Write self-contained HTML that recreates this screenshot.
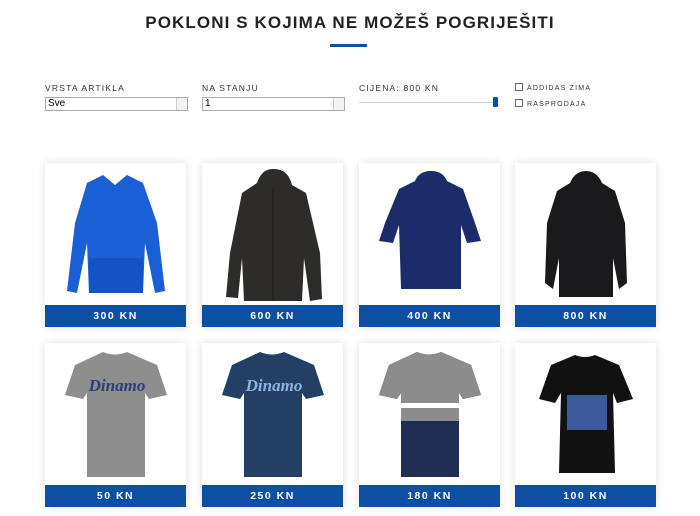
<!DOCTYPE html>
<html><head><meta charset="utf-8"><style>
body{margin:0;width:700px;height:516px;background:#fff;font-family:"Liberation Sans",sans-serif;position:relative;overflow:hidden}
.t{position:absolute;left:0;width:700px;top:13px;text-align:center;font-weight:bold;font-size:17px;letter-spacing:1.1px;color:#222}
.ul{position:absolute;left:330px;top:44px;width:37px;height:3px;background:#0d4fa3}
.lab{position:absolute;font-size:8.5px;letter-spacing:1.2px;color:#333}
.sel{position:absolute;top:97px;height:12px;border:1px solid #aaa;font-size:10px;line-height:12px;padding-left:2px;box-sizing:content-box;color:#000}
.sel:after{content:"";position:absolute;right:0;top:0;width:10px;height:12px;border-left:1px solid #ccc;background:#f3f3f3}
.cb{position:absolute;font-size:7px;letter-spacing:1.2px;color:#333}
.cb i{display:inline-block;width:6px;height:6px;border:1px solid #666;margin-right:4px;vertical-align:-1px}
.card{position:absolute;width:141px;height:164px;background:#fff;box-shadow:0 0 8px rgba(0,0,0,.13)}
.card svg{position:absolute;left:0;top:0}
.p{position:absolute;left:0;bottom:0;width:141px;height:22px;background:#0d4fa3;color:#fff;font-weight:bold;font-size:10.5px;letter-spacing:1.5px;text-align:center;line-height:22px}
</style></head><body>
<div class="t">POKLONI S KOJIMA NE MOŽEŠ POGRIJEŠITI</div>
<div class="ul"></div>
<div class="lab" style="left:45px;top:83px">VRSTA ARTIKLA</div>
<div class="lab" style="left:202px;top:83px">NA STANJU</div>
<div class="lab" style="left:359px;top:83px">CIJENA: 800 KN</div>
<div class="sel" style="left:45px;width:139px">Sve</div>
<div class="sel" style="left:202px;width:139px">1</div>
<div style="position:absolute;left:359px;top:102px;width:136px;height:1px;background:#ccc"></div>
<div style="position:absolute;left:493px;top:97px;width:5px;height:10px;background:#0d4fa3;border-radius:1px"></div>
<div class="cb" style="left:515px;top:83px"><i></i>ADDIDAS ZIMA</div>
<div class="cb" style="left:515px;top:99px"><i></i>RASPRODAJA</div>

<div class="card" style="left:45px;top:163px"><svg width="141" height="141"><path d="M58 12 L70 22 L82 12 L98 20 L112 60 L120 128 L110 130 L100 80 L98 130 L44 130 L42 80 L32 130 L22 128 L30 60 L42 20Z" fill="#1a5fd6"/><rect x="44" y="95" width="54" height="35" fill="#1552c4"/></svg><div class="p">300 KN</div></div>
<div class="card" style="left:202px;top:163px"><svg width="141" height="141"><path d="M55 20 Q60 5 72 6 Q86 6 90 22 L104 30 L118 90 L120 136 L108 138 L102 95 L100 138 L42 138 L40 95 L36 135 L24 134 L28 90 L40 30Z" fill="#2e2c2a"/><line x1="71" y1="25" x2="71" y2="138" stroke="#1a1a1a"/></svg><div class="p">600 KN</div></div>
<div class="card" style="left:359px;top:163px"><svg width="141" height="141"><path d="M56 18 Q60 8 72 8 Q84 8 88 18 L104 26 L116 60 L122 78 L108 80 L102 62 L102 126 L42 126 L40 62 L34 80 L20 78 L26 60 L40 26Z" fill="#1c2b6a"/></svg><div class="p">400 KN</div></div>
<div class="card" style="left:515px;top:163px"><svg width="141" height="141"><path d="M55 20 Q60 8 71 8 Q82 8 87 20 L100 28 L110 60 L112 120 L104 126 L98 95 L98 134 L44 134 L44 95 L38 126 L30 120 L32 60 L42 28Z" fill="#1a1a1c"/></svg><div class="p">800 KN</div></div>

<div class="card" style="left:45px;top:343px"><svg width="141" height="141"><path d="M58 9 Q70 14 82 9 L112 22 L122 52 L104 56 L100 50 L100 134 L42 134 L42 50 L38 56 L20 52 L30 22Z" fill="#8e8e8e"/><text x="72" y="48" font-family="Liberation Serif" font-style="italic" font-weight="bold" font-size="17" fill="#2a3e7a" text-anchor="middle">Dinamo</text></svg><div class="p">50 KN</div></div>
<div class="card" style="left:202px;top:343px"><svg width="141" height="141"><path d="M58 9 Q70 14 82 9 L112 22 L122 52 L104 56 L100 50 L100 134 L42 134 L42 50 L38 56 L20 52 L30 22Z" fill="#233f66"/><text x="72" y="48" font-family="Liberation Serif" font-style="italic" font-weight="bold" font-size="17" fill="#8fb3e0" text-anchor="middle">Dinamo</text></svg><div class="p">250 KN</div></div>
<div class="card" style="left:359px;top:343px"><svg width="141" height="141"><path d="M58 9 Q70 14 82 9 L112 22 L122 52 L104 56 L100 50 L100 134 L42 134 L42 50 L38 56 L20 52 L30 22Z" fill="#1f2d52"/><path d="M58 9 Q70 14 82 9 L112 22 L122 52 L104 56 L100 50 L100 78 L42 78 L42 50 L38 56 L20 52 L30 22Z" fill="#8c8c8c"/><rect x="30" y="60" width="84" height="5" fill="#fff"/></svg><div class="p">180 KN</div></div>
<div class="card" style="left:515px;top:343px"><svg width="141" height="141"><path d="M60 12 Q70 16 80 12 L104 22 L118 56 L102 60 L98 50 L100 130 L44 130 L46 50 L40 60 L24 56 L36 22Z" fill="#111"/><rect x="52" y="52" width="40" height="35" fill="#3d5a9a"/></svg><div class="p">100 KN</div></div>
</body></html>
